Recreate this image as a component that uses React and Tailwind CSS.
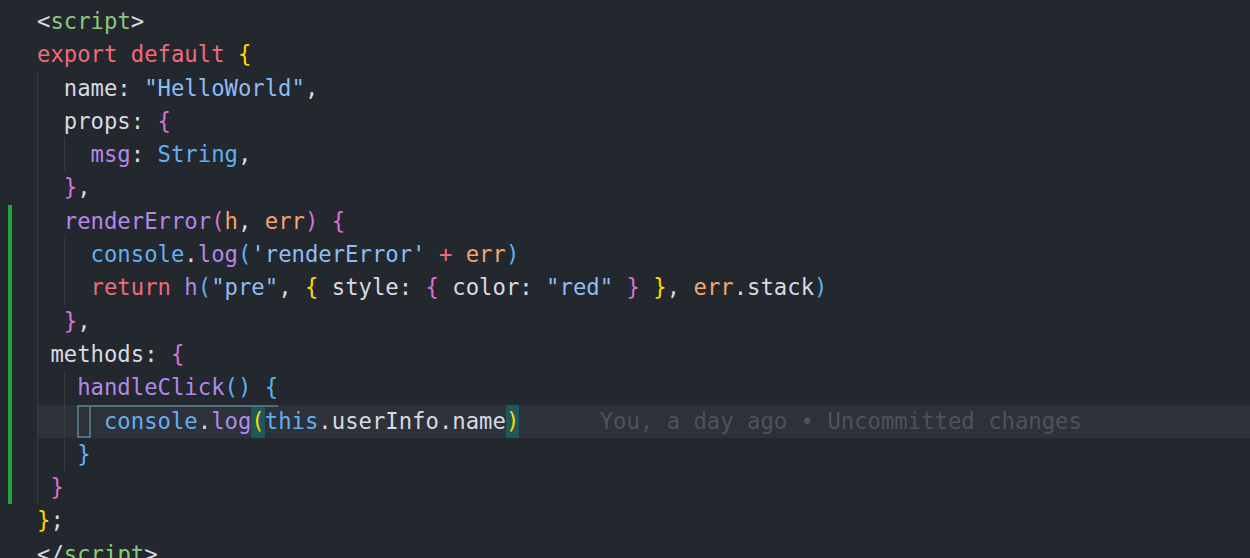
import React from "react";

const W = "text-[#d7dae0]";
const RED = "text-[#ef6b7a]";
const GRN = "text-[#89ca78]";
const YEL = "text-[#ffd700]";
const PNK = "text-[#da70d6]";
const BLU = "text-[#61b0f0]";
const STR = "text-[#8dbdf3]";
const PUR = "text-[#b488e6]";
const ORG = "text-[#f2a56e]";

const G2 = () => (
  <span className="w-[2ch] shrink-0 self-stretch border-l border-[#373c44]" />
);
const G1 = () => (
  <span className="w-[1ch] shrink-0 self-stretch border-l border-[#373c44]" />
);

function Line({ guides = [], bar = false, active = false, children, extra }) {
  return (
    <div className="flex h-[33.3px]">
      <div className="w-[37px] shrink-0 flex">
        {bar ? <div className="ml-[8px] w-[4px] bg-[#23a640]" /> : null}
      </div>
      <div
        className={
          "relative flex flex-1 " + (active ? "bg-[#2c313a]" : "")
        }
      >
        {guides}
        {extra}
        <span className="whitespace-pre leading-[33.3px]">{children}</span>
      </div>
    </div>
  );
}

export default function App() {
  return (
    <div
      className="w-[1250px] h-[558px] overflow-hidden bg-[#23272e] pt-[5px] text-[22.25px] leading-[33.3px]"
      style={{ fontFamily: '"DejaVu Sans Mono", "Liberation Mono", monospace' }}
    >
      <Line>
        <span className={W}>&lt;</span>
        <span className={GRN}>script</span>
        <span className={W}>&gt;</span>
      </Line>
      <Line>
        <span className={RED}>export default </span>
        <span className={YEL}>{"{"}</span>
      </Line>
      <Line guides={[<G2 key="a" />]}>
        <span className={W}>name: </span>
        <span className={STR}>"HelloWorld"</span>
        <span className={W}>,</span>
      </Line>
      <Line guides={[<G2 key="a" />]}>
        <span className={W}>props: </span>
        <span className={PNK}>{"{"}</span>
      </Line>
      <Line guides={[<G2 key="a" />, <G2 key="b" />]}>
        <span className={PUR}>msg</span>
        <span className={W}>: </span>
        <span className={BLU}>String</span>
        <span className={W}>,</span>
      </Line>
      <Line guides={[<G2 key="a" />]}>
        <span className={PNK}>{"}"}</span>
        <span className={W}>,</span>
      </Line>
      <Line bar guides={[<G2 key="a" />]}>
        <span className={PUR}>renderError</span>
        <span className={PNK}>(</span>
        <span className={ORG}>h</span>
        <span className={W}>, </span>
        <span className={ORG}>err</span>
        <span className={PNK}>)</span>
        <span className={W}> </span>
        <span className={PNK}>{"{"}</span>
      </Line>
      <Line bar guides={[<G2 key="a" />, <G2 key="b" />]}>
        <span className={BLU}>console</span>
        <span className={W}>.</span>
        <span className={PUR}>log</span>
        <span className={BLU}>(</span>
        <span className={STR}>'renderError'</span>
        <span className={W}> </span>
        <span className={RED}>+</span>
        <span className={W}> </span>
        <span className={ORG}>err</span>
        <span className={BLU}>)</span>
      </Line>
      <Line bar guides={[<G2 key="a" />, <G2 key="b" />]}>
        <span className={RED}>return </span>
        <span className={PUR}>h</span>
        <span className={BLU}>(</span>
        <span className={STR}>"pre"</span>
        <span className={W}>, </span>
        <span className={YEL}>{"{"}</span>
        <span className={W}> style: </span>
        <span className={PNK}>{"{"}</span>
        <span className={W}> color: </span>
        <span className={STR}>"red"</span>
        <span className={W}> </span>
        <span className={PNK}>{"}"}</span>
        <span className={W}> </span>
        <span className={YEL}>{"}"}</span>
        <span className={W}>, </span>
        <span className={ORG}>err</span>
        <span className={W}>.stack</span>
        <span className={BLU}>)</span>
      </Line>
      <Line bar guides={[<G2 key="a" />]}>
        <span className={PNK}>{"}"}</span>
        <span className={W}>,</span>
      </Line>
      <Line bar guides={[<G1 key="a" />]}>
        <span className={W}>methods: </span>
        <span className={PNK}>{"{"}</span>
      </Line>
      <Line bar guides={[<G2 key="a" />, <G1 key="b" />]}>
        <span className={PUR}>handleClick</span>
        <span className={BLU}>()</span>
        <span className={W}> </span>
        <span className={BLU}>{"{"}</span>
      </Line>
      <Line
        bar
        active
        guides={[
          <G2 key="a" />,
          <G1 key="b" />,
          <span
            key="c"
            className="w-[1ch] shrink-0 self-stretch border-2 border-[#50707f]"
          />,
        ]}
        extra={
          <span className="absolute left-[3ch] top-0 w-[15ch] h-[2px] bg-[#50707f]" />
        }
      >
        <span className={W}> </span>
        <span className={BLU}>console</span>
        <span className={W}>.</span>
        <span className={PUR}>log</span>
        <span className={"inline-block align-top bg-[#1e585d] " + YEL}>(</span>
        <span className={BLU}>this</span>
        <span className={W}>.userInfo.name</span>
        <span className={"inline-block align-top bg-[#1e585d] " + YEL}>)</span>
        <span className="ml-[6ch] text-[#4d535c]">
          You, a day ago • Uncommitted changes
        </span>
      </Line>
      <Line bar guides={[<G2 key="a" />, <G1 key="b" />]}>
        <span className={BLU}>{"}"}</span>
      </Line>
      <Line bar guides={[<G1 key="a" />]}>
        <span className={PNK}>{"}"}</span>
      </Line>
      <Line>
        <span className={YEL}>{"}"}</span>
        <span className={W}>;</span>
      </Line>
      <Line>
        <span className={W}>&lt;/</span>
        <span className={GRN}>script</span>
        <span className={W}>&gt;</span>
      </Line>
    </div>
  );
}
